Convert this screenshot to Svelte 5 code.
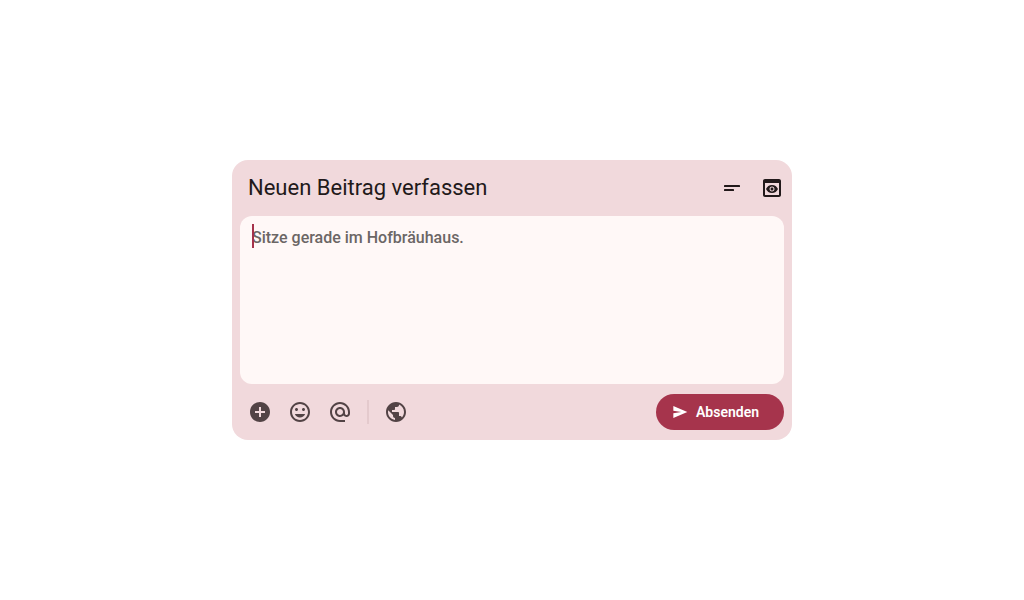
<script>
  let text = $state('');

  function focusOnMount(node) {
    node.focus();
  }
</script>

<main>
  <form class="composer" onsubmit={(e) => e.preventDefault()}>
    <header>
      <h1><label for="post">Neuen Beitrag verfassen</label></h1>
      <button type="button" class="icon dark" aria-label="Inhaltswarnung">
        <svg viewBox="0 0 24 24"><rect x="4" y="9" width="16" height="2" rx="0.6" /><rect x="4" y="13" width="10" height="2" rx="0.6" /></svg>
      </button>
      <button type="button" class="icon dark" aria-label="Vorschau">
        <svg viewBox="0 0 24 24"><path d="M19 3H5c-1.11 0-2 .9-2 2v14c0 1.1.89 2 2 2h14c1.1 0 2-.9 2-2V5c0-1.1-.89-2-2-2zm0 16H5V7h14v12zm-5.5-6c0 .83-.67 1.5-1.5 1.5s-1.5-.67-1.5-1.5.67-1.5 1.5-1.5 1.5.67 1.5 1.5zM12 9c-2.73 0-5.06 1.66-6 4 .94 2.34 3.27 4 6 4s5.06-1.66 6-4c-.94-2.34-3.27-4-6-4zm0 6.5c-1.38 0-2.5-1.12-2.5-2.5s1.12-2.5 2.5-2.5 2.5 1.12 2.5 2.5-1.12 2.5-2.5 2.5z" /></svg>
      </button>
    </header>

    <div class="field">
      <textarea id="post" placeholder="Sitze gerade im Hofbräuhaus." bind:value={text} use:focusOnMount></textarea>
      {#if text === ''}<span class="caret"></span>{/if}
    </div>

    <footer>
      <button type="button" class="icon" aria-label="Anhang hinzufügen">
        <svg viewBox="0 0 24 24"><path d="M12 2C6.48 2 2 6.48 2 12s4.480 10 10 10 10-4.480 10-10S17.520 2 12 2zm5 11h-4v4h-2v-4H7v-2h4V7h2v4h4v2z" /></svg>
      </button>
      <button type="button" class="icon" aria-label="Emoji">
        <svg viewBox="0 0 24 24"><path d="M11.990 2C6.470 2 2 6.480 2 12s4.470 10 9.990 10C17.520 22 22 17.520 22 12S17.520 2 11.990 2zM12 20c-4.420 0-8-3.580-8-8s3.580-8 8-8 8 3.580 8 8-3.580 8-8 8zm3.500-9c.83 0 1.500-.67 1.500-1.500S16.330 8 15.500 8 14 8.670 14 9.500s.67 1.500 1.500 1.500zm-7 0c.83 0 1.500-.67 1.500-1.500S9.330 8 8.500 8 7 8.670 7 9.500 7.670 11 8.500 11zm3.500 6.500c2.330 0 4.310-1.460 5.110-3.500H6.890c.8 2.040 2.780 3.500 5.110 3.500z" /></svg>
      </button>
      <button type="button" class="icon" aria-label="Erwähnen">
        <svg viewBox="0 0 24 24"><path d="M12 2C6.480 2 2 6.480 2 12s4.480 10 10 10h5v-2h-5c-4.340 0-8-3.660-8-8s3.660-8 8-8 8 3.660 8 8v1.430c0 .79-.71 1.570-1.500 1.570s-1.500-.78-1.500-1.570V12c0-2.760-2.240-5-5-5s-5 2.240-5 5 2.240 5 5 5c1.380 0 2.640-.56 3.540-1.470.65.89 1.770 1.470 2.960 1.470 1.970 0 3.500-1.600 3.500-3.570V12c0-5.520-4.480-10-10-10zm0 13c-1.660 0-3-1.340-3-3s1.340-3 3-3 3 1.340 3 3-1.340 3-3 3z" /></svg>
      </button>
      <span class="divider"></span>
      <button type="button" class="icon" aria-label="Sichtbarkeit: Öffentlich">
        <svg viewBox="0 0 24 24"><path d="M12 2C6.480 2 2 6.480 2 12s4.480 10 10 10 10-4.480 10-10S17.520 2 12 2zm-1 17.930c-3.950-.49-7-3.850-7-7.930 0-.62.080-1.210.21-1.790L9 15v1c0 1.100.9 2 2 2v1.930zm6.900-2.540c-.26-.81-1-1.390-1.900-1.390h-1v-3c0-.55-.45-1-1-1H8v-2h2c.55 0 1-.45 1-1V7h2c1.100 0 2-.9 2-2v-.41c2.930 1.190 5 4.060 5 7.410 0 2.080-.8 3.970-2.100 5.390z" /></svg>
      </button>
      <button type="submit" class="send">
        <svg viewBox="0 0 24 24"><path d="M2 21V14L14 12L2 10V3L23 12Z" /></svg>
        Absenden
      </button>
    </footer>
  </form>
</main>

<style>
  :global(body) {
    background: #fff;
  }
  main {
    min-height: 100vh;
    display: flex;
    align-items: center;
    justify-content: center;
    font-family: Roboto, sans-serif;
    color: #22191a;
  }
  .composer {
    width: 100%;
    max-width: 560px;
    border-radius: 16px;
    background: #f1d9dc;
  }
  header {
    display: flex;
    align-items: center;
    height: 56px;
    padding-left: 16px;
  }
  h1 {
    flex: 1;
    margin: 0;
    font-size: 22px;
    line-height: 28px;
    font-weight: 400;
  }
  button {
    border: 0;
    padding: 0;
    cursor: pointer;
  }
  svg {
    display: block;
    width: 24px;
    height: 24px;
    fill: currentColor;
  }
  .icon {
    display: grid;
    place-items: center;
    width: 40px;
    height: 40px;
    border-radius: 50%;
    background: none;
    color: #524345;
  }
  .dark {
    color: #22191a;
  }
  .field {
    position: relative;
    margin: 0 8px;
  }
  textarea {
    display: block;
    box-sizing: border-box;
    width: 100%;
    height: 168px;
    padding: 10px 12px;
    border: 0;
    border-radius: 12px;
    outline: 0;
    resize: none;
    background: #fff8f7;
    color: #22191a;
    caret-color: #a5324b;
    font: 500 16px/24px Roboto, sans-serif;
  }
  textarea:placeholder-shown {
    caret-color: transparent;
  }
  textarea::placeholder {
    color: #6b6665;
    opacity: 1;
  }
  .caret {
    position: absolute;
    left: 12px;
    top: 8px;
    width: 2px;
    height: 24px;
    background: #a5324b;
    pointer-events: none;
  }
  footer {
    display: flex;
    align-items: center;
    height: 56px;
    padding: 0 8px;
  }
  .divider {
    width: 2px;
    height: 24px;
    margin: 0 7px;
    background: #e4cacd;
  }
  .send {
    display: flex;
    align-items: center;
    gap: 8px;
    min-width: 128px;
    height: 36px;
    margin-left: auto;
    padding: 0 24px 0 16px;
    border-radius: 18px;
    background: #a6344c;
    color: #fff;
    font: 600 14px/20px Roboto, sans-serif;
  }
  .send svg {
    width: 16px;
    height: 16px;
  }
</style>
